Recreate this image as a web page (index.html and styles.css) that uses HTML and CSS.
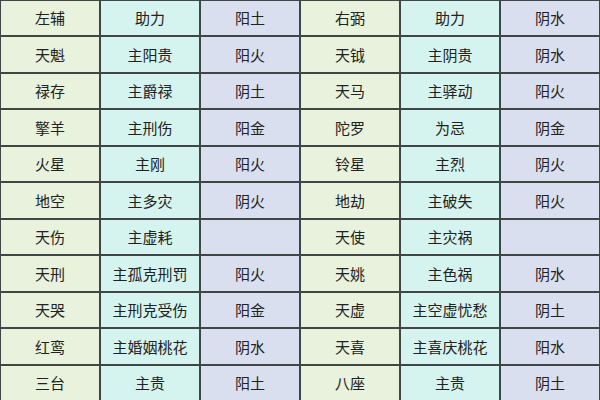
FILE: index.html
```html
<!DOCTYPE html>
<html lang="zh">
<head>
<meta charset="utf-8">
<link rel="stylesheet" href="styles.css">
</head>
<body>
<div class="table">
  <div class="c a">左辅</div><div class="c b">助力</div><div class="c d">阳土</div><div class="c a">右弼</div><div class="c b">助力</div><div class="c d">阴水</div>
  <div class="c a">天魁</div><div class="c b">主阳贵</div><div class="c d">阳火</div><div class="c a">天钺</div><div class="c b">主阴贵</div><div class="c d">阴水</div>
  <div class="c a">禄存</div><div class="c b">主爵禄</div><div class="c d">阴土</div><div class="c a">天马</div><div class="c b">主驿动</div><div class="c d">阳火</div>
  <div class="c a">擎羊</div><div class="c b">主刑伤</div><div class="c d">阳金</div><div class="c a">陀罗</div><div class="c b">为忌</div><div class="c d">阴金</div>
  <div class="c a">火星</div><div class="c b">主刚</div><div class="c d">阳火</div><div class="c a">铃星</div><div class="c b">主烈</div><div class="c d">阴火</div>
  <div class="c a">地空</div><div class="c b">主多灾</div><div class="c d">阴火</div><div class="c a">地劫</div><div class="c b">主破失</div><div class="c d">阳火</div>
  <div class="c a">天伤</div><div class="c b">主虚耗</div><div class="c d"></div><div class="c a">天使</div><div class="c b">主灾祸</div><div class="c d"></div>
  <div class="c a">天刑</div><div class="c b">主孤克刑罚</div><div class="c d">阳火</div><div class="c a">天姚</div><div class="c b">主色祸</div><div class="c d">阴水</div>
  <div class="c a">天哭</div><div class="c b">主刑克受伤</div><div class="c d">阳金</div><div class="c a">天虚</div><div class="c b">主空虚忧愁</div><div class="c d">阴土</div>
  <div class="c a">红鸾</div><div class="c b">主婚姻桃花</div><div class="c d">阴水</div><div class="c a">天喜</div><div class="c b">主喜庆桃花</div><div class="c d">阳水</div>
  <div class="c a">三台</div><div class="c b">主贵</div><div class="c d">阳土</div><div class="c a">八座</div><div class="c b">主贵</div><div class="c d">阴土</div>
</div>
</body>
</html>
```
FILE: styles.css
```css
html, body {
  margin: 0;
  padding: 0;
  width: 600px;
  height: 400px;
  overflow: hidden;
  background: #ffffff;
}
.table {
  width: 598px;
  margin: -1.5px 0 0 -1px;
  padding: 2px;
  background: #3f4746;
  display: grid;
  grid-template-columns: repeat(6, 1fr);
  grid-auto-rows: 34.5px;
  gap: 2px;
  font-family: "Noto Sans CJK SC", "Noto Sans", sans-serif;
  font-size: 15px;
  color: #222222;
}
.c {
  display: flex;
  align-items: center;
  justify-content: center;
  line-height: 1;
}
.a { background: #e8f2dc; }
.b { background: #d6f4ef; }
.d { background: #dadff0; }
```
